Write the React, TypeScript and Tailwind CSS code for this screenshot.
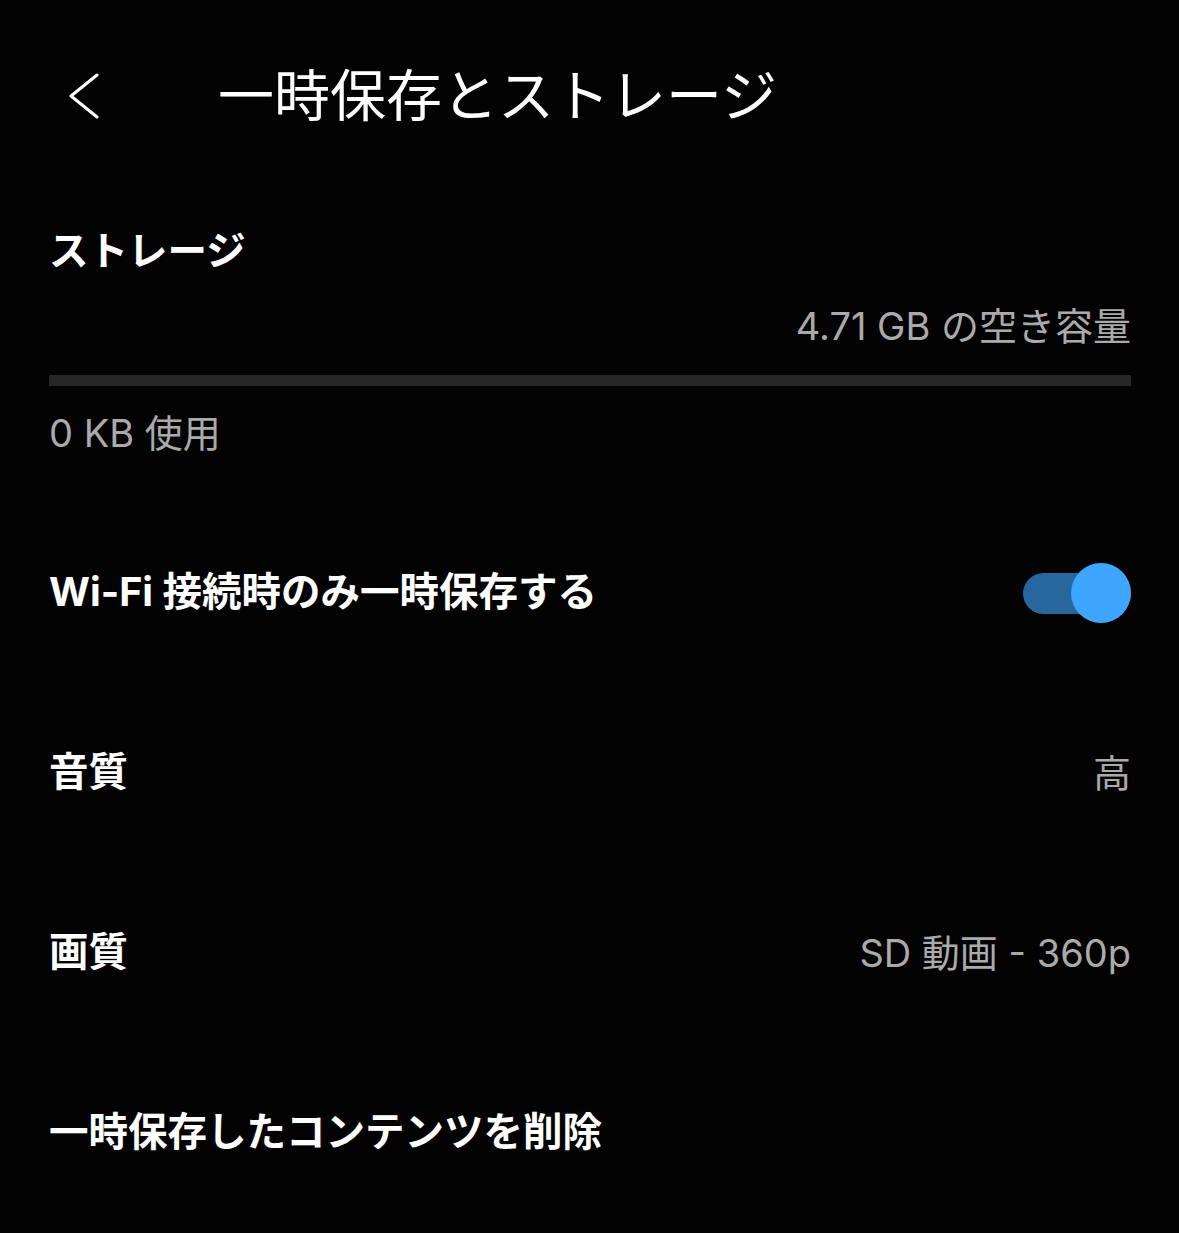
import React from "react";

const font = { fontFamily: 'Inter, "Noto Sans CJK JP", "Noto Sans", sans-serif' };

const SettingRow = ({ label, value, children }: { label: string; value?: string; children?: React.ReactNode }) => (
  <div className="h-[180px] flex items-center justify-between">
    <span className="text-[39.5px] font-bold text-white leading-none">{label}</span>
    {value && <span className="text-[38px] text-[#aaaaaa] leading-none">{value}</span>}
    {children}
  </div>
);

export default function App() {
  return (
    <div className="w-[1179px] h-[1233px] bg-[#030303] overflow-hidden" style={font}>
      {/* Header */}
      <div className="h-[192px] flex items-center">
        <svg className="ml-[68px]" width="32" height="46" viewBox="0 0 32 46" fill="none">
          <polyline points="29,2 3,23 29,44" stroke="#ffffff" strokeWidth="3" strokeLinecap="round" strokeLinejoin="round" />
        </svg>
        <h1 className="ml-[118px] text-[56px] font-normal text-white leading-none">一時保存とストレージ</h1>
      </div>

      <div className="pl-[49px] pr-[48px]">
        {/* Storage */}
        <div className="mt-[30px] h-[60px] flex items-center">
          <span className="text-[39.5px] font-bold text-white leading-none">ストレージ</span>
        </div>
        <div className="mt-[20px] h-[48px] flex items-center justify-end">
          <span className="text-[38px] text-[#aaaaaa] leading-none">4.71 GB の空き容量</span>
        </div>
        <div className="mt-[25px] h-[11px] bg-[#262626]" />
        <div className="mt-[23px] h-[48px] flex items-center">
          <span className="text-[38px] text-[#aaaaaa] leading-none">0 KB 使用</span>
        </div>

        {/* Settings */}
        <div className="mt-[46px]">
          <SettingRow label="Wi-Fi 接続時のみ一時保存する">
            <div className="relative w-[108px] h-[60px] flex items-center">
              <div className="w-full h-[41px] rounded-full bg-[#27679d]" />
              <div className="absolute right-0 top-0 w-[60px] h-[60px] rounded-full bg-[#3ea6ff]" />
            </div>
          </SettingRow>
          <SettingRow label="音質" value="高" />
          <SettingRow label="画質" value="SD 動画 - 360p" />
          <SettingRow label="一時保存したコンテンツを削除" />
        </div>
      </div>
    </div>
  );
}
